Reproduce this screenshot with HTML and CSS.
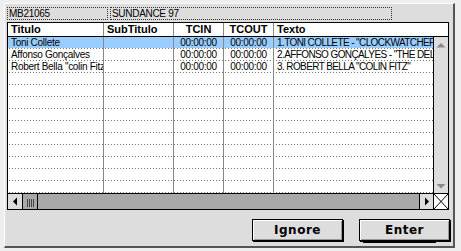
FILE: index.html
```html
<!DOCTYPE html>
<html>
<head>
<meta charset="utf-8">
<link rel="stylesheet" href="styles.css">
</head>
<body>
<div class="window">
  <div class="panel">
    <div class="fields">
      <div class="field f1">MB21065</div>
      <div class="field f2">SUNDANCE 97</div>
    </div>
    <div class="table">
      <div class="thead">
        <div class="th">Titulo</div>
        <div class="th">SubTitulo</div>
        <div class="th center">TCIN</div>
        <div class="th center">TCOUT</div>
        <div class="th">Texto</div>
      </div>
      <div class="tbody">
        <div class="grid">
          <div class="row sel"><div class="td">Toni Collete</div><div class="td"></div><div class="td center">00:00:00</div><div class="td center">00:00:00</div><div class="td caps">1.TONI COLLETE - "CLOCKWATCHERS"</div></div>
          <div class="row"><div class="td">Affonso Gonçalves</div><div class="td"></div><div class="td center">00:00:00</div><div class="td center">00:00:00</div><div class="td caps">2.AFFONSO GONÇALYES - "THE DELTA"</div></div>
          <div class="row"><div class="td">Robert Bella "colin Fitz"</div><div class="td"></div><div class="td center">00:00:00</div><div class="td center">00:00:00</div><div class="td caps">3. ROBERT BELLA "COLIN FITZ"</div></div>
          <div class="row"><div class="td"></div><div class="td"></div><div class="td"></div><div class="td"></div><div class="td"></div></div>
          <div class="row"><div class="td"></div><div class="td"></div><div class="td"></div><div class="td"></div><div class="td"></div></div>
          <div class="row"><div class="td"></div><div class="td"></div><div class="td"></div><div class="td"></div><div class="td"></div></div>
          <div class="row"><div class="td"></div><div class="td"></div><div class="td"></div><div class="td"></div><div class="td"></div></div>
          <div class="row"><div class="td"></div><div class="td"></div><div class="td"></div><div class="td"></div><div class="td"></div></div>
          <div class="row"><div class="td"></div><div class="td"></div><div class="td"></div><div class="td"></div><div class="td"></div></div>
          <div class="row"><div class="td"></div><div class="td"></div><div class="td"></div><div class="td"></div><div class="td"></div></div>
          <div class="row"><div class="td"></div><div class="td"></div><div class="td"></div><div class="td"></div><div class="td"></div></div>
          <div class="row"><div class="td"></div><div class="td"></div><div class="td"></div><div class="td"></div><div class="td"></div></div>
          <div class="row"><div class="td"></div><div class="td"></div><div class="td"></div><div class="td"></div><div class="td"></div></div>
        </div>
        <div class="vscroll">
          <div class="vbtn"><svg width="14" height="15" viewBox="0 0 14 15"><polygon points="2.5,10.5 11.5,10.5 7,6" fill="#8a8a8a"/></svg></div>
          <div class="vbtn down"><svg width="14" height="15" viewBox="0 0 14 15"><polygon points="2.5,6 11.5,6 7,10.5" fill="#8a8a8a"/></svg></div>
        </div>
      </div>
      <div class="hscroll">
        <div class="hbtn left"><svg width="14" height="15" viewBox="0 0 14 15"><polygon points="5,7.5 9,3.5 9,11.5" fill="#000"/></svg></div>
        <div class="thumb"><span></span><span></span><span></span><span></span></div>
        <div class="htrack"></div>
        <div class="hbtn right"><svg width="13" height="15" viewBox="0 0 13 15"><polygon points="9,7.5 5,3.5 5,11.5" fill="#000"/></svg></div>
        <div class="corner"><svg width="14" height="15" viewBox="0 0 14 15"><line x1="0" y1="0" x2="14" y2="15" stroke="#000" stroke-width="1"/><line x1="14" y1="0" x2="0" y2="15" stroke="#000" stroke-width="1"/></svg></div>
      </div>
    </div>
    <div class="buttons">
      <button class="btn">Ignore</button>
      <button class="btn default">Enter</button>
    </div>
  </div>
</div>
</body>
</html>
```
FILE: styles.css
```css
html, body {
  margin: 0;
  padding: 0;
  overflow: hidden;
}

.window {
  width: 461px;
  height: 251px;
  box-sizing: border-box;
  padding: 3px 6px 3px 4px;
  background: #eeeeee;
}

.panel {
  height: 100%;
  box-sizing: border-box;
  border-top: 1px solid #ffffff;
  border-left: 1px solid #ffffff;
  border-right: 2px solid #555555;
  border-bottom: 2px solid #555555;
  background: #dddddd;
  padding: 3px 0 0 2px;
}

.fields {
  display: flex;
  gap: 2px;
  height: 13px;
}

.field {
  box-sizing: border-box;
  height: 13px;
  border: 1px dotted #333333;
  font-family: "Liberation Sans", Arial, sans-serif;
  font-size: 10px;
  letter-spacing: -0.3px;
  line-height: 12px;
  padding-left: 1px;
  color: #000;
  white-space: nowrap;
}

.f1 { width: 101px; }
.f2 { width: 282px; }

.table {
  margin-top: 2px;
  width: 442px;
  height: 188px;
  box-sizing: border-box;
  border: 1px solid #000;
  background: #ffffff;
  display: flex;
  flex-direction: column;
}

.thead {
  display: grid;
  grid-template-columns: 96px 70px 50px 50px 1fr;
  height: 14px;
  box-sizing: border-box;
  border-bottom: 1px solid #000;
  font-family: "Liberation Sans", Arial, sans-serif;
  font-weight: bold;
  font-size: 11px;
  line-height: 13px;
  color: #000;
}

.th {
  border-right: 1px solid #888888;
  padding-left: 3px;
  white-space: nowrap;
  overflow: hidden;
}

.th:last-child { border-right: none; }

.center {
  text-align: center;
}

.th.center, .td.center {
  padding-left: 0;
}

.tbody {
  display: flex;
  height: 156px;
}

.grid {
  width: 425px;
  overflow: hidden;
}

.row {
  display: grid;
  grid-template-columns: 96px 70px 50px 50px 159px;
  height: 12px;
  background-image: linear-gradient(to right, #777777 1px, transparent 1px);
  background-size: 3px 1px;
  background-repeat: repeat-x;
  background-position: 1px bottom;
}

.row.sel {
  background-image:
    linear-gradient(to right, #777777 1px, transparent 1px),
    linear-gradient(#99ccff, #99ccff);
  background-size: 3px 1px, 100% 11px;
  background-repeat: repeat-x, no-repeat;
  background-position: 1px bottom, left top;
}

.td {
  border-right: 1px solid #888888;
  font-family: "Liberation Sans", Arial, sans-serif;
  font-size: 10px;
  letter-spacing: -0.3px;
  line-height: 11px;
  padding-left: 3px;
  white-space: nowrap;
  overflow: hidden;
  color: #000;
}

.td.caps {
  letter-spacing: -0.6px;
}

.td:last-child { border-right: none; }

.vscroll {
  width: 15px;
  box-sizing: border-box;
  border-left: 1px solid #000;
  background: #dddddd;
  display: flex;
  flex-direction: column;
  justify-content: space-between;
}

.vbtn {
  height: 15px;
}

.vbtn svg, .hbtn svg, .corner svg {
  display: block;
}

.hscroll {
  height: 16px;
  box-sizing: border-box;
  border-top: 1px solid #000;
  display: flex;
}

.hbtn {
  background: #dddddd;
  box-sizing: border-box;
}

.hbtn.left {
  width: 15px;
  border-right: 1px solid #000;
}

.hbtn.right {
  width: 14px;
  border-left: 1px solid #000;
}

.thumb {
  width: 15px;
  box-sizing: border-box;
  border-right: 1px solid #000;
  background: #a8a8a8;
  display: flex;
  gap: 1px;
  padding: 5px 0 0 4px;
}

.thumb span {
  width: 1px;
  height: 8px;
  background: #444444;
}

.htrack {
  flex: 1;
  background: #a8a8a8;
}

.corner {
  width: 15px;
  box-sizing: border-box;
  border-left: 1px solid #000;
  background: #ffffff;
}

.buttons {
  display: flex;
  justify-content: flex-end;
  gap: 16px;
  margin-top: 9px;
  padding-right: 3px;
}

.btn {
  position: relative;
  width: 91px;
  height: 22px;
  box-sizing: border-box;
  margin: 0;
  padding: 0;
  border: 1px solid #000;
  border-radius: 0;
  box-shadow: 1px 1px 0 #000, inset 1px 1px 0 #ffffff, inset -1px -1px 0 #999999;
  background: #dddddd;
  font-family: "DejaVu Sans", sans-serif;
  font-weight: bold;
  font-size: 12px;
  letter-spacing: 0.5px;
  color: #000;
}

.btn.default::after {
  content: "";
  position: absolute;
  left: 3px;
  right: 13px;
  bottom: -3px;
  height: 1px;
  background: #000;
}
```
